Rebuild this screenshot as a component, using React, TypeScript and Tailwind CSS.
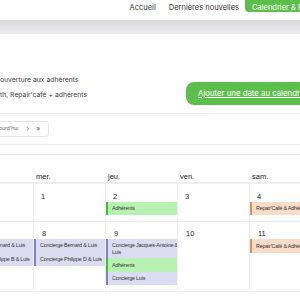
import React from "react";

const poppins = { fontFamily: "Inter, 'Noto Sans', sans-serif" };
const arial = { fontFamily: "'Liberation Sans', Arial, sans-serif" };

function Ev({ text, kind, h = "h-[13px]" }: { text: string; kind: "blue" | "green" | "orange"; h?: string }) {
  const cls =
    kind === "blue"
      ? "bg-[#dcdcf0] border-[#7f80cf]"
      : kind === "green"
      ? "bg-[#b8f2b2] border-[#35c42f]"
      : "bg-[#f9dcc8] border-[#e58c52]";
  return (
    <div className={`${cls} ${h} border-l-2 pl-[4px] flex items-center text-[5.4px] tracking-[-0.2px] leading-[7px] text-[#333] overflow-hidden whitespace-nowrap`}>
      {text}
    </div>
  );
}

export default function App() {
  return (
    <div className="w-[300px] h-[300px] overflow-hidden bg-white relative" style={arial}>
      {/* nav */}
      <div className="h-[14px] flex items-start justify-end text-[7.5px] text-[#333]" style={poppins}>
        <span className="mt-[2px] mr-[13px]">Accueil</span>
        <span className="mt-[2px] mr-[6px]">Dernières nouvelles</span>
        <div className="w-[55px] h-[12px] bg-[#5dbf4b] rounded-bl-[4px] text-white pl-[7px] pt-[2px] whitespace-nowrap overflow-hidden">
          Calendrier &amp; Réservations
        </div>
      </div>
      <div className="mt-[6px] h-[14px] bg-gradient-to-b from-[#d9d9de] to-[#ececf0]" />

      {/* info */}
      <div className="flex mt-[38px]" style={poppins}>
        <div className="flex flex-col gap-[6px] text-[6.8px] text-[#3a3a3a] pt-[3px] w-[186px]">
          <span className="h-[9px] leading-[9px]">ouverture aux adhérents</span>
          <span className="h-[9px] leading-[9px]">th, Repair'café + adhérents</span>
        </div>
      </div>
      <div className="flex justify-end -mt-[17px]" style={poppins}>
        <div className="w-[124px] -mr-[10px] h-[23px] bg-[#5dbf4b] rounded-[8px] text-white text-[7.8px] underline flex items-center pl-[12px] whitespace-nowrap overflow-hidden">
          Ajouter une date au calendrier
        </div>
      </div>
      <div className="mt-[8px] h-px bg-[#eeeeee]" />

      {/* toolbar */}
      <div className="mt-[7px] ml-[-20px] w-[69px] h-[16px] border border-[#e6e6e6] rounded-[3px] flex items-center text-[5px] text-[#666]" style={poppins}>
        <span className="ml-[18px]">ourd'hui</span>
        <span className="ml-[8px] text-[7px]">›</span>
        <span className="ml-[7px] text-[7px]">»</span>
      </div>
      <div className="mt-[7px] h-px bg-[#efefef]" />

      {/* calendar */}
      <div className="mt-[9px] ml-[-111px] w-[432px] border-t border-[#eeeeee]">
        <div className="grid grid-cols-6 h-[29px] border-b-2 border-[#eeeeee] text-[7.5px] text-[#222]">
          {["lun.", "mar.", "mer.", "jeu.", "ven.", "sam."].map((d) => (
            <div key={d} className="pl-[3px] pt-[16px]">{d}</div>
          ))}
        </div>
        <div className="grid grid-cols-6 h-[38px] border-b border-[#eeeeee]">
          {["", "", "1", "2", "3", "4"].map((n, i) => (
            <div key={i} className={`${i > 0 ? "border-l" : ""} border-[#f0f0f0] pt-[7px]`}>
              <div className="pl-[7px] text-[7.5px] h-[11px] text-[#222]">{n}</div>
              {i === 3 && <Ev text="Adhérents" kind="green" />}
              {i === 5 && <Ev text="Repair'Café & Adhérents" kind="orange" />}
            </div>
          ))}
        </div>
        <div className="grid grid-cols-6 h-[70px] border-b border-[#eeeeee]">
          {["6", "7", "8", "9", "10", "11"].map((n, i) => (
            <div key={i} className={`${i > 0 ? "border-l" : ""} border-[#f0f0f0] pt-[6px]`}>
              <div className="pl-[8px] text-[7.5px] h-[11px] text-[#222]">{n}</div>
              {(i === 1 || i === 2) && (
                <div>
                  <Ev text="Concierge Bernard & Luis" kind="blue" />
                  <Ev text={i === 1 ? "Concierge Philippe B & Luis" : "Concierge Philippe D & Luis"} kind="blue" h="h-[14px]" />
                </div>
              )}
              {i === 3 && (
                <div>
                  <div className="bg-[#dcdcf0] border-l-2 border-[#7f80cf] pl-[4px] pt-[3px] h-[19px] text-[5.4px] tracking-[-0.2px] leading-[7px] text-[#333] whitespace-nowrap overflow-hidden">
                    Concierge Jacques-Antoine &amp;
                    <br />
                    Luis
                  </div>
                  <Ev text="Adhérents" kind="green" h="h-[14px]" />
                  <Ev text="Concierge Luis" kind="blue" h="h-[13px]" />
                </div>
              )}
              {i === 5 && <Ev text="Repair'Café & Adhérents" kind="orange" h="h-[14px]" />}
            </div>
          ))}
        </div>
      </div>
    </div>
  );
}
